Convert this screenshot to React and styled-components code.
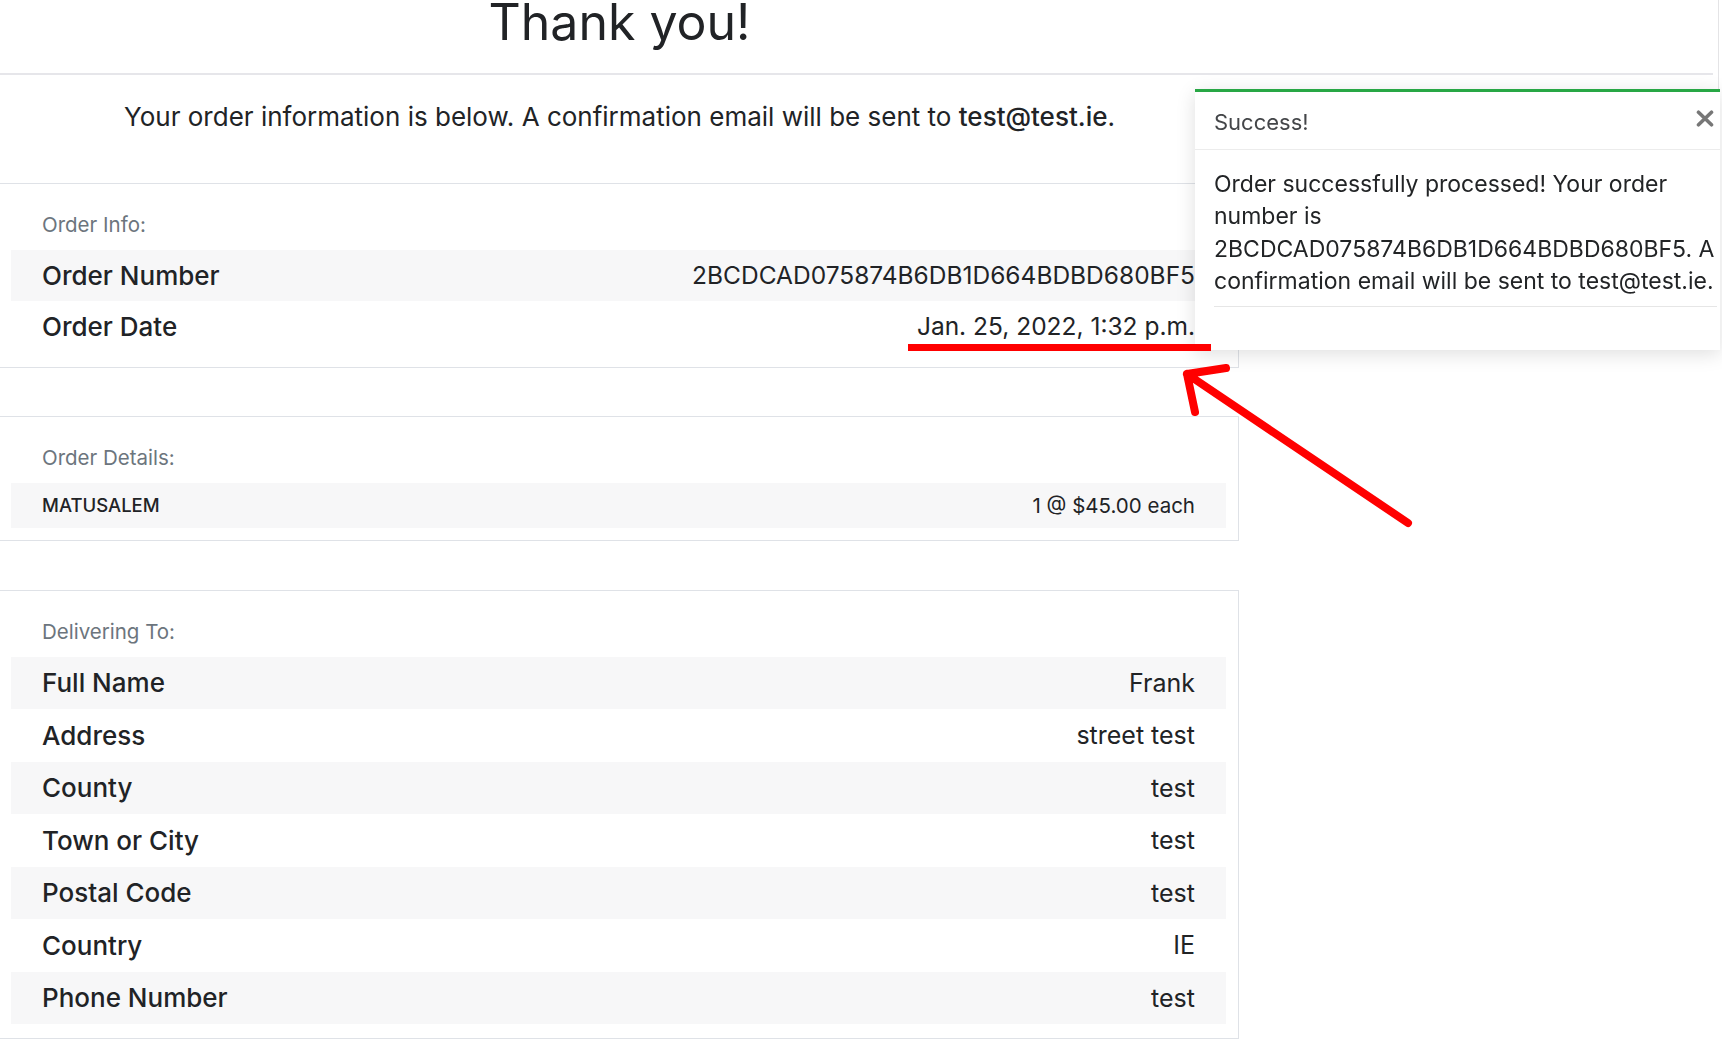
import React from "react";
import styled, { createGlobalStyle } from "styled-components";

const GlobalStyle = createGlobalStyle`
  html, body { margin: 0; padding: 0; background: #ffffff; }
  body {
    font-family: Inter, "Noto Sans", "DejaVu Sans", sans-serif;
    color: #212326;
    overflow: hidden;
  }
  * { box-sizing: border-box; }
`;

const Page = styled.div`
  position: relative;
  width: 1722px;
  height: 1049px;
  overflow: hidden;
`;

const Header = styled.header`
  width: 1719px;
  border-right: 1px solid #e4e4e6;
  padding-bottom: 15px;
`;

const TitleWrap = styled.div`
  width: 1239px;
  text-align: center;
`;

const Title = styled.h1`
  margin: -7px 0 22px;
  font-size: 50px;
  line-height: 58px;
  font-weight: 400;
  color: #212326;
`;

const Rule = styled.hr`
  margin: 0 5px 0 0;
  border: 0;
  height: 2px;
  background: #e6e6ea;
`;

const Column = styled.main`
  width: 1239px;
`;

const Lead = styled.p`
  margin: 0;
  padding: 8px 0 47px;
  text-align: center;
  font-size: 26px;
  line-height: 37.5px;
  color: #212326;
  strong { font-weight: 500; }
`;

const Card = styled.section`
  border: 1px solid #dfe2e7;
  border-left: 0;
  padding: 27px 12px ${(p) => p.$pb}px 11px;
  margin-bottom: ${(p) => p.$gap || 0}px;
`;

const CardLabel = styled.div`
  font-size: 20.5px;
  line-height: 28px;
  color: #6c757d;
  padding-left: 31px;
  margin-bottom: 11px;
`;

const Row = styled.div`
  display: flex;
  align-items: center;
  justify-content: space-between;
  height: ${(p) => p.$h}px;
  padding: 0 31px;
  background: ${(p) => (p.$striped ? "#f7f7f8" : "transparent")};
  color: #212326;
`;

const Key = styled.span`
  font-size: ${(p) => p.$size}px;
  font-weight: 500;
  text-transform: ${(p) => (p.$upper ? "uppercase" : "none")};
`;

const Value = styled.span`
  font-size: ${(p) => p.$size}px;
  font-weight: 400;
  text-align: right;
`;

const Toast = styled.aside`
  position: fixed;
  top: 89px;
  right: 2px;
  width: 525px;
  background: #ffffff;
  border-top: 3px solid #28a745;
  box-shadow: 0 4px 18px rgba(0, 0, 0, 0.13);
  z-index: 5;
`;

const ToastHeader = styled.div`
  display: flex;
  align-items: flex-start;
  justify-content: space-between;
  padding: 15px 5px 12px 19px;
  border-bottom: 1px solid #ececec;
  font-size: 22px;
  line-height: 30px;
  color: #444649;
`;

const CloseButton = styled.button`
  display: flex;
  align-items: center;
  justify-content: center;
  width: 20px;
  height: 20px;
  margin-top: 1px;
  padding: 0;
  border: 0;
  background: transparent;
  color: #777777;
  cursor: pointer;
`;

const ToastBody = styled.div`
  padding: 18px 3px 43px 19px;
`;

const ToastText = styled.p`
  margin: 0 0 8px;
  font-size: 23px;
  line-height: 32.4px;
  color: #222426;
`;

const ToastRule = styled.hr`
  margin: 0;
  border: 0;
  height: 1px;
  background: #e6e6e6;
`;

const Annotation = styled.svg`
  position: absolute;
  left: 0;
  top: 0;
  width: 1722px;
  height: 1049px;
  pointer-events: none;
  z-index: 10;
`;

const orderInfo = [
  ["Order Number", "2BCDCAD075874B6DB1D664BDBD680BF5"],
  ["Order Date", "Jan. 25, 2022, 1:32 p.m."],
];

const delivery = [
  ["Full Name", "Frank"],
  ["Address", "street test"],
  ["County", "test"],
  ["Town or City", "test"],
  ["Postal Code", "test"],
  ["Country", "IE"],
  ["Phone Number", "test"],
];

export default function App() {
  return (
    <Page>
      <GlobalStyle />
      <Header>
        <TitleWrap>
          <Title>Thank you!</Title>
        </TitleWrap>
        <Rule />
      </Header>
      <Column>
        <Lead>
          Your order information is below. A confirmation email will be sent to{" "}
          <strong>test@test.ie</strong>.
        </Lead>
        <Card $gap={48} $pb={15}>
          <CardLabel>Order Info:</CardLabel>
          {orderInfo.map(([k, v], i) => (
            <Row key={k} $h={51} $striped={i % 2 === 0}>
              <Key $size={26}>{k}</Key>
              <Value $size={24.5}>{v}</Value>
            </Row>
          ))}
        </Card>
        <Card $gap={49} $pb={12}>
          <CardLabel>Order Details:</CardLabel>
          <Row $h={45} $striped>
            <Key $size={18.5} $upper>Matusalem</Key>
            <Value $size={20.5}>1 @ $45.00 each</Value>
          </Row>
        </Card>
        <Card $pb={14}>
          <CardLabel>Delivering To:</CardLabel>
          {delivery.map(([k, v], i) => (
            <Row key={k} $h={52.5} $striped={i % 2 === 0}>
              <Key $size={26}>{k}</Key>
              <Value $size={25}>{v}</Value>
            </Row>
          ))}
        </Card>
      </Column>
      <Toast role="alert">
        <ToastHeader>
          <span>Success!</span>
          <CloseButton aria-label="Close">
            <svg width="18" height="17" viewBox="0 0 18 17">
              <path
                d="M2.5 2.2 L15.5 14.8 M15.5 2.2 L2.5 14.8"
                stroke="currentColor"
                strokeWidth="3.6"
                strokeLinecap="round"
              />
            </svg>
          </CloseButton>
        </ToastHeader>
        <ToastBody>
          <ToastText>
            Order successfully processed! Your order number is
            2BCDCAD075874B6DB1D664BDBD680BF5. A confirmation email will be sent
            to test@test.ie.
          </ToastText>
          <ToastRule />
        </ToastBody>
      </Toast>
      <Annotation viewBox="0 0 1722 1049">
        <rect x="908" y="344" width="303" height="7" fill="#ff0000" />
        <path
          d="M1408 523 L1187 374 M1187 374 L1226 368 M1187 374 L1195 412"
          stroke="#ff0000"
          strokeWidth="8"
          strokeLinecap="round"
          strokeLinejoin="round"
          fill="none"
        />
      </Annotation>
    </Page>
  );
}
